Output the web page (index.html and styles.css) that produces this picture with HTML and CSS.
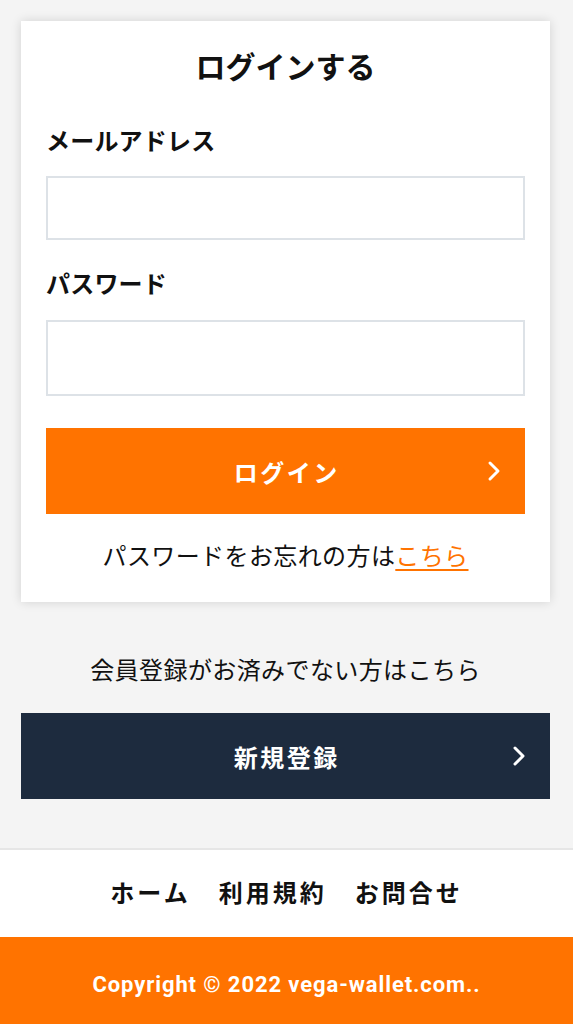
FILE: index.html
```html
<!DOCTYPE html>
<html lang="ja">
<head>
<meta charset="utf-8">
<title>ログイン</title>
<link rel="stylesheet" href="styles.css">
</head>
<body>
<main class="main">
  <section class="card">
    <h1 class="title">ログインする</h1>
    <label class="label" for="email">メールアドレス</label>
    <input class="input input-email" id="email" type="email">
    <label class="label label-pw" for="pw">パスワード</label>
    <input class="input input-pw" id="pw" type="password">
    <a class="btn btn-orange" href="#"><span class="btn-text">ログイン</span>
      <svg class="chev" width="14" height="22" viewBox="0 0 14 22"><path d="M3 3l8 8-8 8" fill="none" stroke="#fff" stroke-width="3" stroke-linecap="round" stroke-linejoin="round"/></svg>
    </a>
    <p class="forgot">パスワードをお忘れの方は<a class="forgot-link" href="#">こちら</a></p>
  </section>
  <p class="register-note">会員登録がお済みでない方はこちら</p>
  <a class="btn btn-navy" href="#"><span class="btn-text">新規登録</span>
    <svg class="chev" width="14" height="22" viewBox="0 0 14 22"><path d="M3 3l8 8-8 8" fill="none" stroke="#fff" stroke-width="3" stroke-linecap="round" stroke-linejoin="round"/></svg>
  </a>
</main>
<nav class="nav">
  <a href="#">ホーム</a>
  <a href="#">利用規約</a>
  <a href="#">お問合せ</a>
</nav>
<footer class="footer">Copyright © 2022 vega-wallet.com..</footer>
</body>
</html>
```
FILE: styles.css
```css
* { box-sizing: border-box; }
html, body { margin: 0; padding: 0; }
body {
  background: #f4f4f4;
  font-family: "Noto Sans CJK JP", "Noto Sans", sans-serif;
  color: #111;
  letter-spacing: 0.4px;
}
.main {
  padding: 21px 23px 49px 21px;
}
.card {
  background: #fff;
  box-shadow: 0 0 10px rgba(0,0,0,0.14);
  padding: 23px 25px 31px;
  display: flex;
  flex-direction: column;
}
.title {
  margin: 0;
  text-align: center;
  font-size: 30px;
  font-weight: 700;
  line-height: 42px;
  letter-spacing: 0;
}
.label {
  display: block;
  font-size: 24px;
  font-weight: 700;
  line-height: 33px;
  margin-top: 37px;
  margin-bottom: 20px;
  letter-spacing: 0.2px;
}
.label-pw { margin-top: 26px; margin-bottom: 21px; }
.input {
  display: block;
  width: 100%;
  border: 2px solid #dde2e7;
  background: #fff;
  border-radius: 0;
  outline: none;
}
.input-email { height: 64px; }
.input-pw { height: 76px; }
.btn {
  position: relative;
  display: flex;
  align-items: center;
  justify-content: center;
  height: 86px;
  color: #fff;
  text-decoration: none;
  font-size: 24px;
  font-weight: 700;
  letter-spacing: 2.5px;
}
.btn-text { padding-left: 2.5px; }
.btn-orange {
  background: #ff7300;
  margin-top: 32px;
}
.btn-navy {
  background: #1d2b3e;
}
.chev {
  position: absolute;
  right: 24px;
  top: 50%;
  margin-top: -11px;
}
.forgot {
  margin: 24px 0 0;
  text-align: center;
  font-size: 24px;
  line-height: 33px;
}
.forgot-link {
  color: #ff7300;
  text-decoration: underline;
  text-underline-offset: 4px;
  text-decoration-thickness: 1.5px;
}
.register-note {
  margin: 50px 0 28px;
  text-align: center;
  font-size: 24px;
  line-height: 33px;
}
.nav {
  background: #fff;
  border-top: 2px solid #e6e6e6;
  height: 89px;
  display: flex;
  align-items: center;
  justify-content: center;
  gap: 28px;
  padding-bottom: 4px;
}
.nav a {
  color: #111;
  text-decoration: none;
  font-size: 24px;
  font-weight: 700;
  letter-spacing: 3px;
}
.footer {
  background: #ff7300;
  color: #fff;
  height: 88px;
  display: flex;
  align-items: center;
  justify-content: center;
  padding-top: 6px;
  font-family: Roboto, "Liberation Sans", sans-serif;
  font-weight: 700;
  font-size: 22px;
  letter-spacing: 0.9px;
}
```
